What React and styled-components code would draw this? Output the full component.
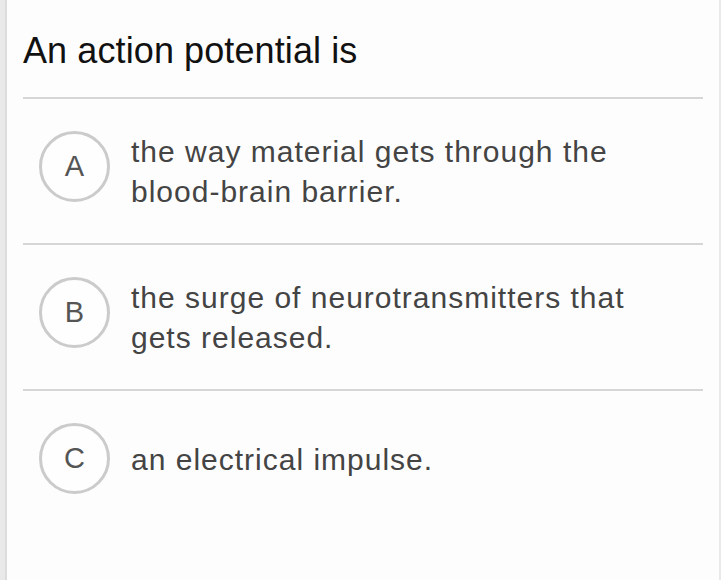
import React from "react";
import styled, { createGlobalStyle } from "styled-components";

const Global = createGlobalStyle`
  html, body { margin: 0; padding: 0; background: #fdfdfd; }
  body { font-family: "Liberation Sans", Arial, Helvetica, sans-serif; }
`;

const Page = styled.div`
  display: flex;
  min-height: 580px;
  background: #fdfdfd;
`;

const SideBar = styled.div`
  flex: 0 0 ${(p) => p.$w}px;
  background: #e9e9e9;
  border-right: ${(p) => (p.$edge ? "2px solid #dcdcdc" : "none")};
  box-sizing: border-box;
`;

const Content = styled.div`
  flex: 1;
  padding: 0 16px;
  display: flex;
  flex-direction: column;
`;

const Question = styled.h1`
  margin: 0;
  padding: 29px 0 24px;
  font-size: 36px;
  line-height: 44px;
  font-weight: 400;
  letter-spacing: 0.1px;
  color: #111;
`;

const Divider = styled.div`
  height: 2px;
  background: #d6d6d6;
`;

const Option = styled.div`
  display: flex;
  align-items: flex-start;
  gap: 21px;
  padding: 32px 0 31px 16px;
`;

const Letter = styled.div`
  flex: 0 0 71px;
  height: 71px;
  box-sizing: border-box;
  border: 3px solid #cbcbcb;
  border-radius: 50%;
  background: #fefefe;
  display: flex;
  align-items: center;
  justify-content: center;
  font-size: 29px;
  color: #555;
`;

const Answer = styled.div`
  flex: 1;
  margin-top: ${(p) => p.$offset}px;
  padding-right: 40px;
  font-size: 30px;
  line-height: 40px;
  letter-spacing: 1px;
  color: #444;
`;

const options = [
  { l: "A", t: "the way material gets through the blood-brain barrier.", o: 1 },
  { l: "B", t: "the surge of neurotransmitters that gets released.", o: 1 },
  { l: "C", t: "an electrical impulse.", o: 17 },
];

export default function App() {
  return (
    <>
      <Global />
      <Page>
        <SideBar $w={7} $edge />
        <Content>
          <Question>An action potential is</Question>
          {options.map((op, i) => (
            <React.Fragment key={op.l}>
              <Divider />
              <Option>
                <Letter>{op.l}</Letter>
                <Answer $offset={op.o}>{op.t}</Answer>
              </Option>
            </React.Fragment>
          ))}
        </Content>
        <SideBar $w={2} />
      </Page>
    </>
  );
}
